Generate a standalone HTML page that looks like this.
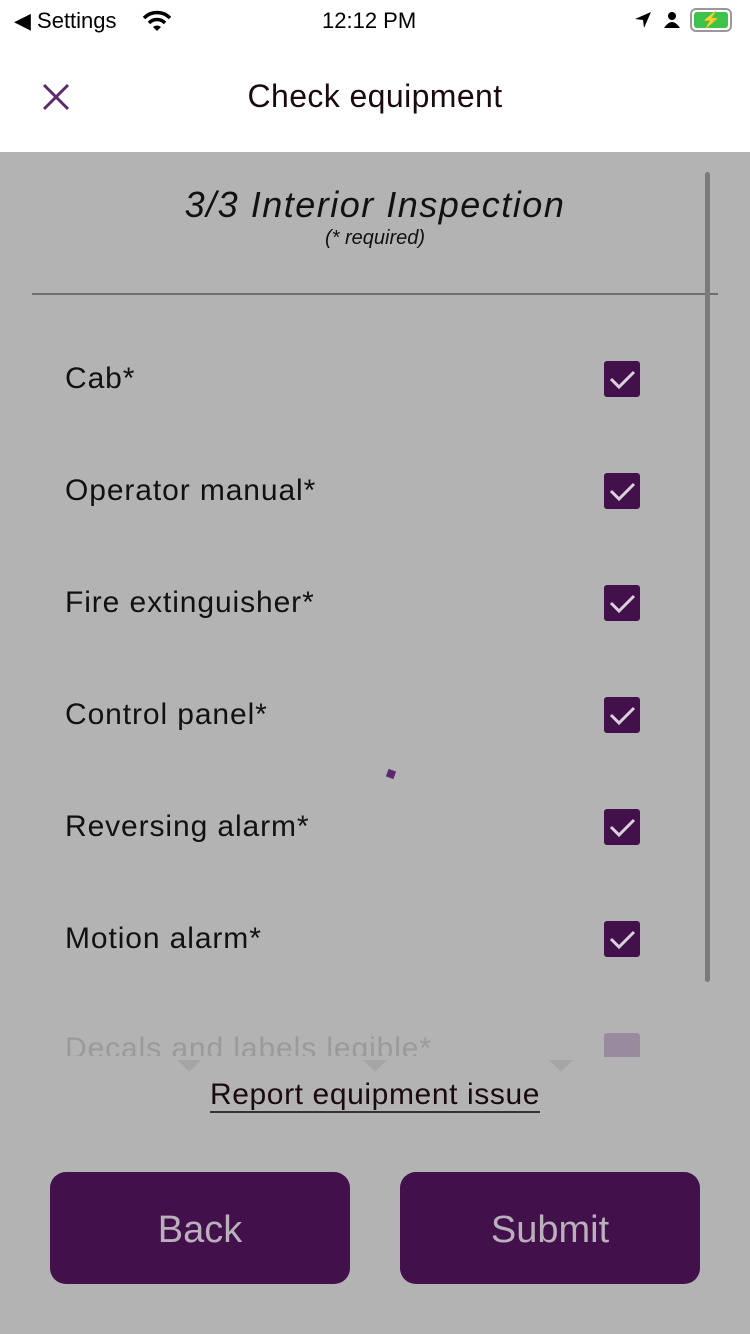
<!DOCTYPE html>
<html><head><meta charset="utf-8"><style>
*{margin:0;padding:0;box-sizing:border-box}
body{width:750px;height:1334px;overflow:hidden;background:#b3b3b3;font-family:"Liberation Sans",sans-serif;position:relative}
.top{position:absolute;left:0;top:0;width:750px;height:152px;background:#fff}
.abs{position:absolute}
.item{position:absolute;left:65px;font-size:30px;color:#111;letter-spacing:0.9px}
.cb{position:absolute;left:604px;width:36px;height:36px;background:#42104a;border-radius:3px}
.btn{position:absolute;top:1172px;width:300px;height:112px;background:#42104a;border-radius:16px;color:#b9b0bb;font-size:38px;text-align:center;line-height:116px}
</style></head><body>
<div class="top">
 <div class="abs" style="left:14px;top:8px;font-size:22px;color:#000">◀ Settings</div>
 <svg class="abs" style="left:142px;top:10px" width="30" height="22" viewBox="0 0 30 22"><path d="M2 8 A18 18 0 0 1 28 8" stroke="#000" stroke-width="3.5" fill="none"/><path d="M7 13 A11 11 0 0 1 23 13" stroke="#000" stroke-width="3.5" fill="none"/><path d="M11 17 L15 21 L19 17 A6 6 0 0 0 11 17Z" fill="#000"/></svg>
 <div class="abs" style="left:322px;top:8px;font-size:22px;color:#000">12:12 PM</div>
 <svg class="abs" style="left:633px;top:10px" width="20" height="20" viewBox="0 0 20 20"><path d="M18 2 L2 9 L10 10 L11 18Z" fill="#000"/></svg>
 <svg class="abs" style="left:663px;top:10px" width="18" height="20" viewBox="0 0 18 20"><circle cx="9" cy="6" r="4" fill="#000"/><path d="M1 18 Q9 6 17 18Z" fill="#000"/></svg>
 <div class="abs" style="left:690px;top:8px;width:42px;height:24px;border:2px solid #999;border-radius:6px;padding:2px"><div style="width:100%;height:100%;background:#3dc34b;border-radius:3px;color:#000;font-size:16px;text-align:center;line-height:18px;font-weight:bold">⚡</div></div>
 <svg class="abs" style="left:42px;top:83px" width="28" height="28" viewBox="0 0 28 28"><path d="M2 2 L26 26 M26 2 L2 26" stroke="#5c2a6c" stroke-width="3"/></svg>
 <div class="abs" style="left:0;width:750px;top:78px;text-align:center;font-size:32px;color:#1a0a0e;letter-spacing:0.4px">Check equipment</div>
</div>
<div class="abs" style="left:0;width:750px;top:184px;text-align:center;font-size:36px;font-style:italic;color:#111;letter-spacing:1.5px">3/3 Interior Inspection</div>
<div class="abs" style="left:0;width:750px;top:227px;text-align:center;font-size:20px;font-style:italic;color:#111">(* required)</div>
<div class="abs" style="left:32px;top:293px;width:686px;height:2px;background:#6e6e6e"></div>
<div class="abs" style="left:705px;top:172px;width:5px;height:810px;background:#7a7a7a;border-radius:3px"></div>
<div class="item" style="top:362px">Cab*</div>
<div class="item" style="top:474px">Operator manual*</div>
<div class="item" style="top:586px">Fire extinguisher*</div>
<div class="item" style="top:698px">Control panel*</div>
<div class="item" style="top:810px">Reversing alarm*</div>
<div class="item" style="top:922px">Motion alarm*</div>
<div class="item" style="top:1032px;color:#9a9a9a;height:24px;overflow:hidden">Decals and labels legible*</div>
<div class="cb" style="top:361px"></div><div class="cb" style="top:473px"></div><div class="cb" style="top:585px"></div><div class="cb" style="top:697px"></div><div class="cb" style="top:809px"></div><div class="cb" style="top:921px"></div>
<div class="cb" style="top:1033px;height:24px;background:#9a8a9e;border-radius:3px 3px 0 0"></div>
<svg style="position:absolute;left:0;top:0" width="750" height="1334">
<g stroke="#d8d0da" stroke-width="3" fill="none">
<path d="M611 379 L619 387 L634 372"/><path d="M611 491 L619 499 L634 484"/><path d="M611 603 L619 611 L634 596"/><path d="M611 715 L619 723 L634 708"/><path d="M611 827 L619 835 L634 820"/><path d="M611 939 L619 947 L634 932"/></g>
<rect x="387" y="770" width="8" height="8" fill="#5c2a6c" transform="rotate(20 391 774)"/>
<g fill="#a5a5a5"><path d="M177 1060 L201 1060 L189 1072Z"/><path d="M363 1060 L387 1060 L375 1072Z"/><path d="M549 1060 L573 1060 L561 1072Z"/></g>
</svg>
<div class="abs" style="left:0;width:750px;top:1078px;text-align:center;font-size:30px;color:#1a0a0e;letter-spacing:0.6px"><span style="border-bottom:2px solid #333;line-height:33px">Report equipment issue</span></div>
<div class="btn" style="left:50px">Back</div>
<div class="btn" style="left:400px">Submit</div>
</body></html>
